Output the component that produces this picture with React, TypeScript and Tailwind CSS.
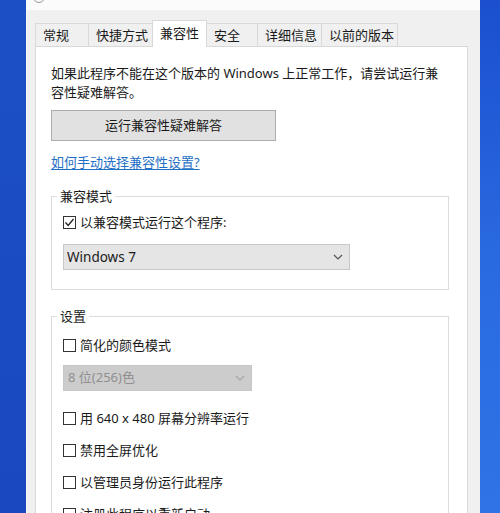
import React from "react";

const font = { fontFamily: '"Noto Sans", "Noto Sans CJK SC", sans-serif' };

function Box({ checked }: { checked?: boolean }) {
  return (
    <span className="w-[13px] h-[13px] border border-[#333333] bg-white flex items-center justify-center shrink-0">
      {checked && (
        <svg width="11" height="11" viewBox="0 0 11 11">
          <polyline points="1.5,5.5 4.2,8.5 9.5,2" fill="none" stroke="#222" strokeWidth="1.3" />
        </svg>
      )}
    </span>
  );
}

function Check({ label, checked, className = "" }: { label: string; checked?: boolean; className?: string }) {
  return (
    <div className={`flex items-center gap-[4px] h-[19px] ${className}`}>
      <Box checked={checked} />
      <span className="leading-[19px] whitespace-nowrap">{label}</span>
    </div>
  );
}

function Chevron({ color }: { color: string }) {
  return (
    <svg width="10" height="6" viewBox="0 0 10 6">
      <polyline points="1,1 5,5 9,1" fill="none" stroke={color} strokeWidth="1.2" />
    </svg>
  );
}

const tabs = [
  { t: "常规", w: 54 },
  { t: "快捷方式", w: 65 },
  { t: "兼容性", w: 55, sel: true },
  { t: "安全", w: 52 },
  { t: "详细信息", w: 65 },
  { t: "以前的版本", w: 77 },
];

export default function App() {
  return (
    <div className="w-[500px] h-[513px] flex overflow-hidden text-[13px] text-[#1a1a1a]" style={font}>
      <div className="w-[26px] h-full bg-gradient-to-b from-[#1c4fc6] to-[#1a48c0]" />
      <div className="flex-1 flex flex-col bg-[#f0f0f0] border-l border-[#f7f7f7]">
        <div className="h-[10px] bg-[#fbfbfb] shrink-0 pl-[6px] overflow-hidden">
          <div className="w-[12px] h-[12px] rounded-full border border-[#9a9a9a] -mt-[9px]" />
        </div>
        <div className="h-[10px] shrink-0" />
        <div className="flex items-end h-[26px] pl-[9px] shrink-0">
          {tabs.map((tab, i) => (
            <div
              key={i}
              style={{ width: tab.w }}
              className={
                tab.sel
                  ? "relative z-10 -mb-px h-[27px] bg-white border border-b-0 border-[#d9d9d9] -ml-px pl-[7px] flex items-center leading-[19px] pb-[2px] whitespace-nowrap"
                  : "h-[23px] bg-[#f0f0f0] border border-b-0 border-[#d9d9d9] -ml-px pl-[7px] flex items-center leading-[19px] whitespace-nowrap"
              }
            >
              {tab.t}
            </div>
          ))}
        </div>
        <div className="flex-1 ml-[8px] mr-[12px] bg-white border border-[#d9d9d9] pl-[15px] pr-[18px] pt-[17px]">
          <p className="leading-[19px] pr-[4px]">
            如果此程序不能在这个版本的 Windows 上正常工作，请尝试运行兼容性疑难解答。
          </p>
          <div className="mt-[8px] w-[225px] h-[31px] bg-[#e1e1e1] border border-[#adadad] flex items-center justify-center">
            运行兼容性疑难解答
          </div>
          <div className="mt-[12px] leading-[19px] text-[#1f6fc5] underline underline-offset-2">
            如何手动选择兼容性设置?
          </div>
          <fieldset className="mt-[15px] border border-[#dcdcdc] pl-[5px] pb-[19px]">
            <legend className="px-[3px] leading-[19px]">兼容模式</legend>
            <div className="pl-[6px]">
              <Check className="mt-[7px]" label="以兼容模式运行这个程序:" checked />
              <div className="mt-[12px] w-[287px] h-[26px] bg-[#e5e5e5] border border-[#c8c8c8] flex items-center justify-between pl-[3px] pr-[6px] text-[13.5px]">
                <span>Windows 7</span>
                <Chevron color="#555" />
              </div>
            </div>
          </fieldset>
          <fieldset className="mt-[17px] border border-[#dcdcdc] pl-[5px] pb-[19px]">
            <legend className="px-[3px] leading-[19px]">设置</legend>
            <div className="pl-[6px]">
              <Check className="mt-[10px]" label="简化的颜色模式" />
              <div className="mt-[10px] w-[189px] h-[26px] bg-[#cccccc] border border-[#c6c6c6] flex items-center justify-between pl-[4px] pr-[6px] text-[#8f8f8f]">
                <span>8 位(256)色</span>
                <Chevron color="#a8a8a8" />
              </div>
              <Check className="mt-[18px]" label="用 640 x 480 屏幕分辨率运行" />
              <Check className="mt-[13px]" label="禁用全屏优化" />
              <Check className="mt-[13px]" label="以管理员身份运行此程序" />
              <Check className="mt-[13px]" label="注册此程序以重新启动" />
            </div>
          </fieldset>
        </div>
      </div>
      <div className="w-[20px] h-full bg-gradient-to-b from-[#1b4fcf] via-[#2a6ae0] to-[#2f73e6]" />
    </div>
  );
}
